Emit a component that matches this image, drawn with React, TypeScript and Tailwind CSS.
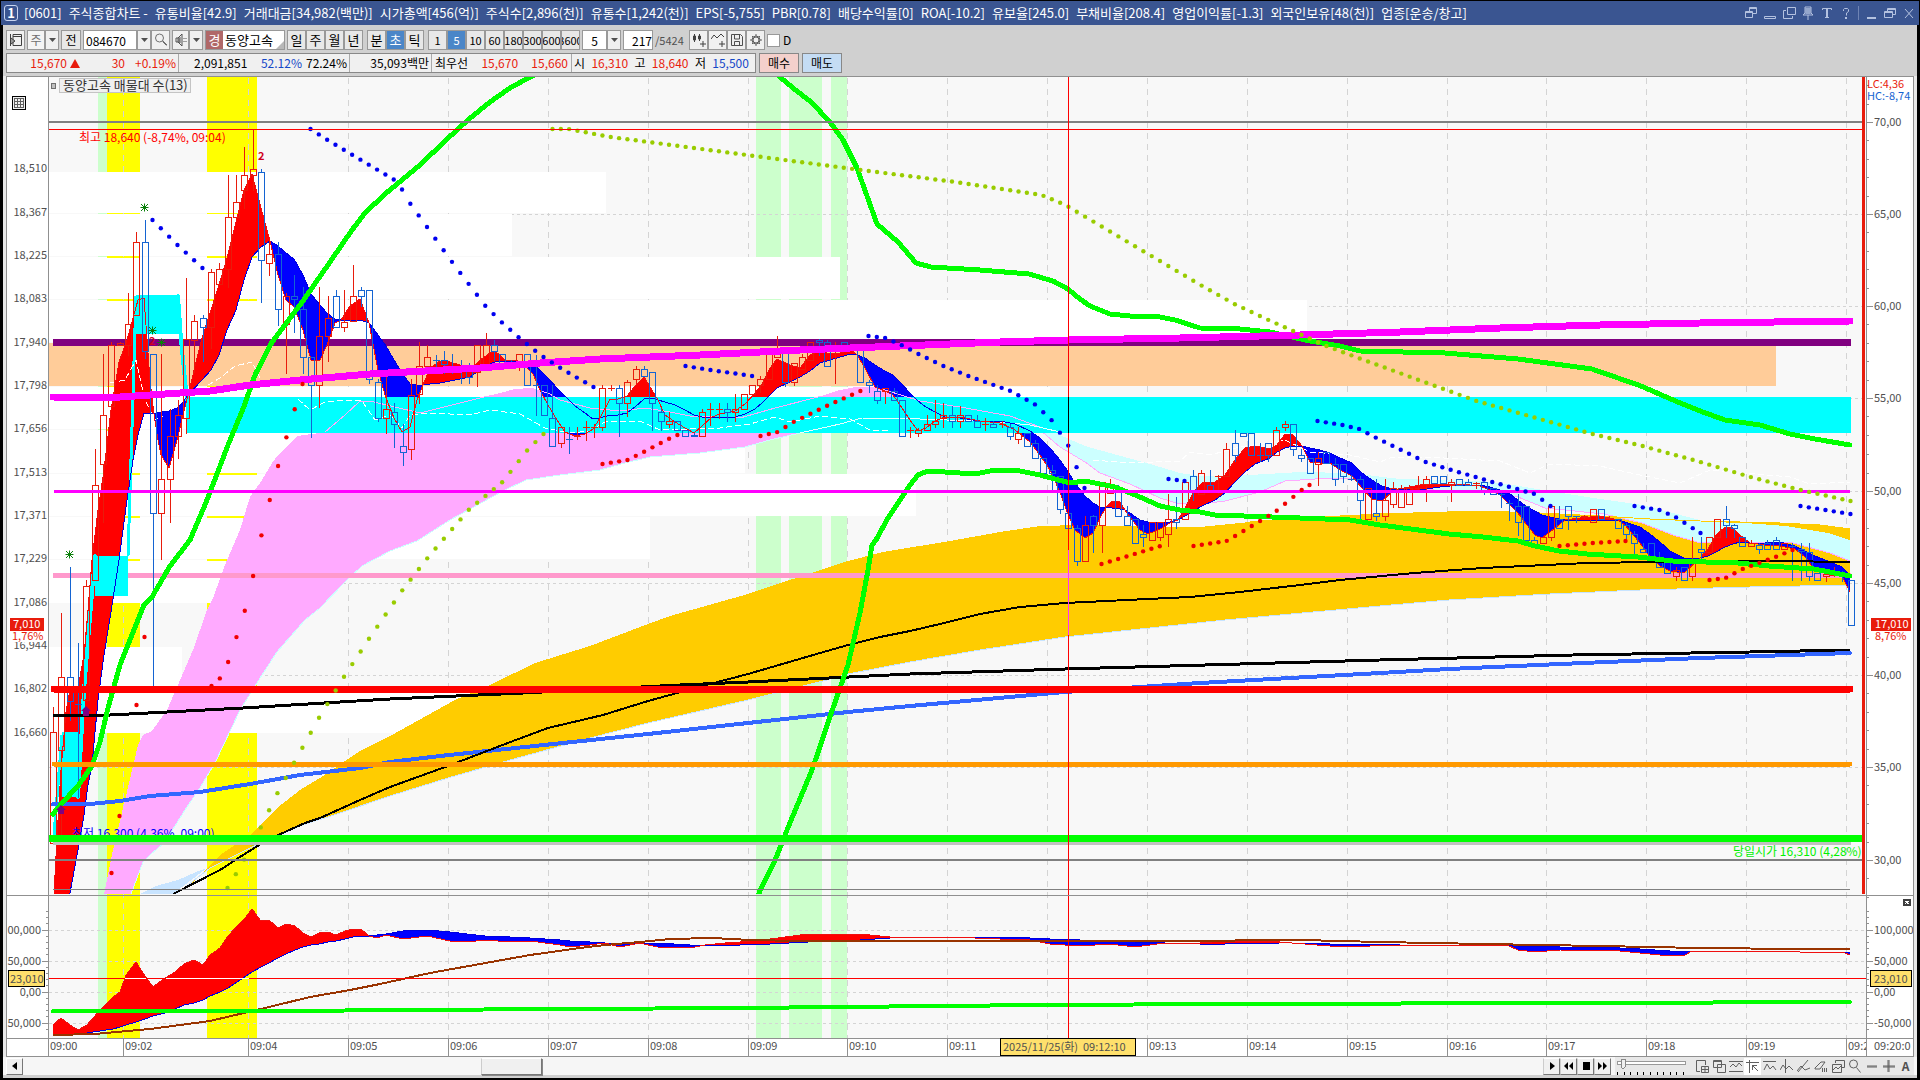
import { ReactNode } from "react";
import clsx from "clsx";

type Pt = [number, number];
type Band = [number, number, number];
type Candle = ["r" | "b", number, number, number, number];

const RED = "#e81c0c";
const BLUE = "#1464d2";
const X0 = 53;
const STEP = 8.322;

const minuteMarks: [number, string][] = [
    [48, "09:00"], [123, "09:02"], [248, "09:04"], [348, "09:05"], [448, "09:06"], [548, "09:07"],
    [648, "09:08"], [748, "09:09"], [847, "09:10"], [947, "09:11"], [1047, ""], [1147, "09:13"],
    [1247, "09:14"], [1347, "09:15"], [1447, "09:16"], [1546, "09:17"], [1646, "09:18"], [1746, "09:19"], [1846, "09:2"],
];

const priceLabels: [number, string][] = [
    [168, "18,510"], [212, "18,367"], [255, "18,225"], [298, "18,083"], [342, "17,940"], [385, "17,798"], [428, "17,656"],
    [472, "17,513"], [515, "17,371"], [558, "17,229"], [602, "17,086"], [645, "16,944"], [688, "16,802"], [732, "16,660"],
];

const rightLabels: [number, string][] = [
    [122, "70,00"], [214, "65,00"], [306, "60,00"], [398, "55,00"], [491, "50,00"], [583, "45,00"], [675, "40,00"], [767, "35,00"], [860, "30,00"],
];

const volumeRows: [number, number, number][] = [
    [172, 214, 606], [214, 257, 512], [257, 300, 840], [300, 343, 1307], [343, 387, 1776], [387, 430, 1050], [430, 474, 745],
    [474, 517, 916], [517, 560, 650], [560, 604, 250], [647, 690, 182], [690, 734, 690],
];

// high, body top, body bottom, low
const candles: Candle[] = [
    ["r", 707, 732, 843, 843], ["r", 613, 677, 750, 840], ["b", 567, 677, 701, 720], ["b", 643, 704, 704, 797], ["r", 580, 586, 700, 700],
    ["r", 449, 485, 580, 580], ["r", 354, 415, 464, 522], ["r", 342, 345, 406, 406], ["r", 342, 343, 345, 345], ["r", 293, 324, 345, 355],
    ["r", 232, 242, 315, 315], ["b", 220, 242, 351, 358], ["b", 354, 354, 513, 687], ["r", 354, 479, 513, 559], ["r", 409, 436, 479, 522],
    ["r", 400, 415, 436, 458], ["r", 278, 339, 418, 433], ["r", 315, 321, 340, 372], ["b", 315, 318, 327, 361], ["r", 269, 272, 327, 348],
    ["r", 263, 269, 284, 284], ["r", 175, 217, 269, 287], ["r", 175, 202, 217, 217], ["r", 147, 175, 190, 208], ["r", 129, 169, 175, 190],
    ["b", 169, 172, 260, 302], ["r", 240, 254, 263, 275], ["b", 242, 254, 309, 325], ["r", 293, 296, 324, 373], ["b", 275, 296, 299, 332],
    ["b", 287, 309, 357, 373], ["b", 357, 357, 385, 437], ["r", 287, 336, 385, 407], ["r", 296, 318, 336, 361], ["b", 290, 296, 327, 327],
    ["r", 290, 322, 327, 331], ["r", 265, 296, 321, 321], ["b", 287, 290, 296, 306], ["b", 290, 290, 379, 383], ["b", 379, 382, 418, 421],
    ["r", 372, 409, 418, 433], ["b", 403, 412, 424, 447], ["b", 424, 446, 452, 465], ["r", 379, 395, 449, 459], ["r", 342, 366, 394, 403],
    ["r", 345, 357, 366, 366], ["b", 355, 360, 360, 373], ["b", 351, 360, 364, 373], ["b", 354, 366, 366, 373], ["b", 360, 367, 367, 383],
    ["b", 363, 366, 377, 383], ["r", 345, 345, 372, 386], ["r", 333, 345, 368, 368], ["b", 340, 345, 351, 360], ["b", 354, 354, 366, 366],
    ["b", 360, 363, 366, 366], ["r", 354, 354, 363, 370], ["b", 354, 354, 385, 385], ["b", 355, 385, 385, 415], ["b", 385, 385, 415, 415],
    ["b", 385, 418, 446, 446], ["r", 427, 427, 443, 447], ["b", 427, 439, 439, 453], ["r", 427, 436, 436, 439], ["r", 421, 427, 427, 440],
    ["r", 424, 427, 427, 437], ["r", 385, 388, 427, 430], ["r", 385, 388, 388, 390], ["b", 385, 388, 403, 436], ["r", 380, 382, 403, 416],
    ["r", 366, 369, 379, 383], ["b", 366, 369, 376, 376], ["b", 372, 372, 403, 430], ["b", 409, 412, 421, 430], ["r", 412, 421, 424, 427],
    ["b", 421, 421, 430, 430], ["b", 430, 430, 436, 436], ["b", 433, 435, 436, 436], ["r", 409, 412, 436, 436], ["r", 403, 409, 409, 425],
    ["r", 403, 409, 409, 418], ["b", 403, 409, 412, 421], ["r", 394, 409, 412, 421], ["r", 394, 394, 409, 409], ["r", 385, 385, 394, 396],
    ["r", 376, 379, 385, 392], ["r", 354, 354, 379, 379], ["r", 336, 348, 357, 357], ["b", 348, 351, 382, 386], ["r", 363, 363, 382, 385],
    ["r", 354, 357, 369, 369], ["r", 342, 342, 360, 360], ["b", 339, 340, 342, 355], ["b", 340, 342, 366, 366], ["r", 342, 345, 348, 383],
    ["b", 342, 342, 345, 349], ["b", 345, 345, 348, 348], ["b", 345, 348, 382, 382], ["b", 380, 382, 385, 392], ["b", 385, 391, 400, 403],
    ["r", 388, 388, 391, 403], ["b", 388, 391, 400, 400], ["b", 400, 400, 436, 436], ["r", 427, 430, 430, 437], ["r", 428, 430, 433, 436],
    ["r", 415, 424, 430, 430], ["r", 400, 421, 424, 427], ["r", 403, 415, 418, 427], ["b", 406, 415, 421, 427], ["r", 406, 415, 421, 427],
    ["b", 415, 415, 421, 421], ["b", 415, 421, 427, 427], ["r", 418, 424, 424, 430], ["b", 421, 424, 427, 427], ["r", 421, 424, 424, 427],
    ["b", 424, 427, 436, 439], ["r", 427, 433, 439, 443], ["b", 433, 433, 446, 446], ["b", 440, 443, 458, 458], ["b", 458, 458, 473, 477],
    ["b", 465, 470, 473, 491], ["b", 476, 476, 509, 513], ["b", 513, 513, 528, 528], ["b", 525, 528, 561, 565], ["r", 516, 525, 561, 561],
    ["b", 515, 516, 525, 552], ["r", 482, 482, 525, 552], ["r", 479, 485, 493, 493], ["b", 485, 488, 516, 516], ["b", 506, 516, 525, 525],
    ["b", 519, 519, 543, 543], ["b", 525, 534, 537, 546], ["r", 522, 522, 540, 540], ["r", 522, 522, 537, 540], ["r", 494, 519, 534, 546],
    ["b", 497, 519, 522, 528], ["r", 482, 482, 519, 519], ["b", 470, 476, 491, 500], ["r", 470, 473, 494, 494], ["b", 470, 485, 491, 491],
    ["r", 475, 476, 476, 493], ["r", 443, 449, 476, 476], ["b", 430, 443, 455, 461], ["b", 433, 433, 436, 436], ["b", 433, 433, 455, 455],
    ["b", 443, 455, 455, 461], ["b", 443, 443, 455, 461], ["r", 427, 430, 455, 455], ["r", 421, 424, 427, 430], ["b", 424, 424, 449, 455],
    ["b", 449, 455, 458, 461], ["b", 458, 458, 473, 473], ["r", 452, 458, 464, 485], ["b", 452, 452, 463, 463], ["b", 458, 464, 479, 485],
    ["b", 464, 464, 476, 482], ["b", 475, 479, 479, 480], ["b", 476, 479, 500, 520], ["r", 488, 488, 519, 519], ["b", 479, 513, 516, 520],
    ["r", 479, 500, 516, 520], ["r", 482, 488, 504, 507], ["r", 485, 488, 507, 507], ["r", 485, 488, 504, 504], ["r", 476, 488, 488, 490],
    ["r", 476, 479, 484, 501], ["b", 476, 476, 483, 483], ["b", 476, 476, 483, 483], ["r", 479, 482, 485, 501], ["b", 479, 479, 485, 485],
    ["b", 479, 482, 485, 485], ["r", 482, 483, 483, 488], ["b", 482, 482, 491, 494], ["b", 488, 488, 494, 494], ["b", 493, 494, 494, 507],
    ["b", 500, 503, 503, 520], ["b", 494, 506, 522, 535], ["b", 506, 506, 540, 540], ["b", 537, 540, 546, 546], ["r", 537, 537, 543, 543],
    ["r", 506, 506, 537, 540], ["b", 506, 519, 528, 528], ["b", 506, 506, 516, 529], ["b", 516, 516, 516, 522], ["r", 515, 516, 516, 518],
    ["r", 509, 509, 522, 522], ["b", 509, 509, 519, 519], ["r", 516, 518, 518, 519], ["b", 519, 519, 528, 528], ["b", 523, 525, 534, 538],
    ["b", 531, 534, 543, 553], ["b", 543, 549, 552, 552], ["b", 543, 543, 562, 562], ["b", 552, 558, 567, 567], ["b", 562, 562, 573, 573],
    ["r", 567, 570, 576, 580], ["b", 567, 567, 580, 580], ["r", 537, 561, 576, 580], ["b", 537, 549, 552, 561], ["r", 537, 537, 552, 552],
    ["r", 519, 519, 537, 537], ["b", 506, 519, 525, 537], ["b", 524, 525, 528, 537], ["b", 537, 537, 546, 546], ["r", 540, 543, 546, 546],
    ["b", 543, 545, 549, 553], ["b", 540, 543, 549, 549], ["b", 537, 540, 549, 549], ["r", 543, 543, 549, 549], ["b", 543, 546, 546, 580],
    ["b", 543, 549, 551, 580], ["b", 543, 552, 576, 580], ["b", 573, 573, 580, 580], ["r", 570, 574, 576, 581], ["r", 567, 574, 574, 576],
    ["b", 571, 574, 576, 581], ["b", 580, 580, 625, 625],
];

// x, fast average, slow average
const ribbon: Band[] = [
    [54, 893, 990], [58, 820, 980], [61, 770, 950], [66, 712, 915], [70, 690, 893], [78, 688, 850], [84, 655, 815], [88, 610, 785],
    [92, 560, 765], [98, 510, 700], [104, 470, 655], [111, 410, 612], [119, 362, 560], [127, 340, 500], [133, 318, 460], [138, 300, 435],
    [144, 298, 413], [150, 380, 413], [154, 414, 414], [158, 440, 412], [161, 455, 412], [169, 468, 411], [177, 440, 408], [183, 415, 402],
    [188, 395, 395], [202, 338, 380], [211, 310, 370], [219, 285, 355], [227, 258, 330], [236, 222, 310], [244, 190, 280], [252, 174, 257],
    [261, 208, 247], [270, 241, 241], [278, 275, 246], [286, 300, 253], [294, 307, 259], [303, 330, 275], [311, 360, 294], [320, 360, 305],
    [327, 345, 313], [335, 323, 319], [341, 320, 320], [350, 306, 321], [360, 299, 320], [369, 323, 323], [378, 370, 335], [386, 398, 346],
    [394, 418, 360], [402, 432, 373], [410, 427, 384], [417, 400, 385], [423, 385, 385], [430, 368, 384], [440, 361, 383], [450, 362, 381],
    [460, 365, 379], [470, 370, 377], [480, 360, 370], [490, 353, 364], [495, 351, 362], [505, 360, 361], [518, 361, 361], [525, 366, 361],
    [533, 374, 364], [540, 390, 370], [548, 405, 378], [557, 420, 388], [565, 432, 396], [575, 436, 406], [585, 434, 413], [593, 429, 419],
    [600, 418, 418], [610, 399, 415], [618, 399, 415], [627, 396, 413], [635, 386, 407], [644, 377, 399], [652, 390, 398], [658, 400, 400],
    [665, 415, 402], [675, 422, 405], [685, 428, 410], [694, 433, 415], [702, 426, 417], [712, 417, 417], [720, 414, 417], [735, 411, 417],
    [745, 404, 414], [755, 393, 409], [762, 384, 403], [770, 368, 395], [777, 359, 388], [790, 365, 382], [800, 368, 377], [810, 355, 371],
    [820, 351, 363], [830, 354, 360], [840, 353, 357], [851, 350, 354], [857, 355, 355], [865, 368, 358], [875, 387, 365], [885, 391, 371],
    [893, 395, 375], [900, 405, 382], [910, 420, 393], [918, 431, 401], [926, 428, 407], [935, 421, 412], [945, 417, 417], [960, 417, 418],
    [980, 421, 421], [1000, 423, 421], [1015, 430, 424], [1030, 442, 431], [1040, 455, 438], [1050, 470, 448], [1060, 492, 460],
    [1067, 512, 470], [1075, 530, 483], [1085, 538, 496], [1093, 533, 503], [1100, 518, 507], [1106, 507, 507], [1112, 501, 508],
    [1120, 502, 509], [1125, 510, 510], [1130, 517, 513], [1140, 530, 520], [1148, 534, 522], [1160, 529, 523], [1170, 523, 522],
    [1178, 520, 520], [1185, 508, 516], [1195, 490, 510], [1202, 483, 506], [1215, 482, 500], [1225, 475, 493], [1235, 460, 482],
    [1245, 448, 472], [1255, 446, 464], [1270, 449, 458], [1277, 445, 452], [1285, 434, 448], [1293, 435, 446], [1302, 446, 446],
    [1310, 462, 448], [1320, 463, 450], [1330, 463, 453], [1340, 470, 458], [1352, 476, 463], [1362, 488, 473], [1372, 499, 480],
    [1382, 501, 486], [1392, 492, 489], [1398, 489, 489], [1410, 487, 490], [1420, 485, 490], [1440, 484, 487], [1460, 484, 485],
    [1480, 486, 485], [1490, 490, 487], [1500, 495, 490], [1510, 505, 494], [1518, 513, 500], [1527, 525, 507], [1535, 535, 511],
    [1542, 538, 515], [1550, 532, 517], [1565, 520, 520], [1580, 518, 520], [1600, 516, 520], [1618, 520, 520], [1625, 525, 522],
    [1640, 543, 527], [1650, 557, 534], [1660, 566, 542], [1670, 571, 551], [1684, 573, 558], [1700, 558, 558], [1708, 549, 556],
    [1716, 535, 552], [1725, 527, 547], [1733, 528, 544], [1740, 535, 542], [1750, 543, 543], [1765, 545, 543], [1780, 546, 542],
    [1795, 549, 546], [1805, 557, 551], [1815, 570, 556], [1830, 575, 562], [1842, 576, 567], [1850, 592, 575],
];

const indicator: Band[] = [
    [53, 1025, 1035], [61, 1018, 1035], [70, 1025, 1034], [78, 1030, 1034], [87, 1025, 1033], [100, 1010, 1031], [113, 997, 1029],
    [120, 992, 1027], [126, 975, 1025], [136, 962, 1022], [145, 976, 1019], [153, 987, 1016], [165, 978, 1013], [175, 972, 1009],
    [184, 964, 1005], [194, 960, 1003], [203, 965, 1000], [210, 955, 996], [220, 948, 992], [228, 936, 988], [240, 923, 980],
    [246, 917, 976], [252, 909, 972], [261, 921, 967], [269, 920, 963], [278, 928, 958], [286, 924, 954], [295, 926, 950],
    [303, 933, 947], [311, 937, 945], [319, 933, 944], [328, 932, 942], [336, 935, 941], [345, 931, 939], [353, 929, 937],
    [361, 929, 936], [369, 936, 936], [377, 938, 935], [386, 935, 934], [403, 939, 931], [427, 936, 930], [450, 941, 932],
    [467, 942, 934], [485, 940, 936], [510, 942, 937], [530, 941, 938], [560, 945, 940], [570, 947, 941], [590, 945, 942],
    [605, 943, 943], [620, 947, 943], [640, 943, 943], [657, 947, 943], [690, 948, 945], [705, 945, 945], [725, 943, 945],
    [740, 942, 945], [770, 939, 944], [808, 934, 942], [860, 934, 940], [890, 937, 938], [900, 937, 937], [950, 937, 937],
    [1000, 939, 937], [1030, 940, 938], [1050, 944, 939], [1080, 946, 940], [1110, 944, 941], [1135, 947, 942], [1165, 943, 943],
    [1200, 943, 944], [1225, 941, 944], [1280, 942, 943], [1292, 943, 943], [1330, 946, 944], [1370, 946, 944], [1400, 945, 945],
    [1507, 945, 945], [1518, 950, 946], [1535, 952, 946], [1560, 950, 947], [1620, 951, 948], [1640, 953, 949], [1670, 956, 951],
    [1685, 955, 952], [1692, 951, 951], [1800, 952, 952], [1845, 953, 952], [1850, 955, 953],
];

const magentaLine: Pt[] = [[53, 397], [105, 398], [150, 395], [210, 391], [250, 385], [300, 380], [370, 374], [480, 368], [540, 363], [600, 359], [700, 355], [800, 350], [900, 346], [1000, 342], [1068, 340], [1180, 338], [1300, 335], [1400, 332], [1500, 328], [1600, 325], [1700, 323], [1850, 321]];

const upperBand: Pt[] = [[53, 814], [62, 803], [78, 786], [92, 766], [100, 742], [108, 708], [120, 665], [132, 635], [144, 605], [152, 597], [170, 566], [190, 540], [205, 505], [217, 474], [228, 445], [243, 409], [255, 375], [272, 342], [290, 318], [305, 298], [330, 262], [352, 230], [365, 213], [385, 194], [420, 165], [445, 141], [469, 119], [490, 102], [510, 88], [530, 77], [550, 68], [770, 68], [780, 77], [793, 88], [811, 102], [830, 122], [843, 140], [857, 168], [867, 196], [877, 224], [898, 242], [916, 263], [931, 267], [980, 270], [1029, 274], [1053, 281], [1068, 289], [1080, 299], [1090, 306], [1110, 314], [1130, 316], [1155, 316], [1175, 320], [1200, 328], [1240, 329], [1270, 332], [1310, 341], [1340, 346], [1360, 351], [1445, 353], [1518, 359], [1592, 369], [1641, 386], [1673, 400], [1700, 411], [1725, 420], [1760, 425], [1790, 434], [1815, 439], [1850, 445]];

const lowerBand: Pt[] = [[759, 893], [776, 858], [787, 830], [812, 770], [833, 708], [848, 665], [860, 613], [868, 570], [872, 545], [876, 540], [888, 518], [900, 500], [910, 485], [918, 475], [928, 471], [945, 472], [975, 474], [995, 470], [1015, 470], [1040, 475], [1070, 483], [1085, 481], [1100, 484], [1115, 487], [1140, 497], [1160, 506], [1180, 510], [1200, 512], [1215, 515], [1300, 518], [1350, 520], [1380, 525], [1449, 534], [1483, 537], [1518, 541], [1535, 546], [1559, 551], [1587, 554], [1638, 557], [1673, 561], [1738, 563], [1769, 566], [1814, 569], [1850, 576]];

const blackFast: Pt[] = [[173, 894], [220, 870], [240, 857], [267, 840], [305, 823], [320, 818], [360, 800], [390, 787], [448, 766], [513, 741], [548, 728], [603, 715], [648, 701], [710, 684], [748, 674], [820, 653], [848, 645], [880, 637], [910, 631], [940, 624], [980, 614], [1020, 607], [1065, 603], [1127, 600], [1190, 597], [1240, 592], [1300, 585], [1340, 580], [1414, 573], [1483, 568], [1587, 563], [1655, 562], [1776, 561], [1850, 562]];
const blackSlow: Pt[] = [[53, 715], [110, 715], [167, 712], [243, 708], [340, 702], [390, 699], [523, 693], [680, 685], [748, 682], [910, 674], [1065, 669], [1380, 660], [1573, 655], [1750, 652], [1850, 650]];
const blueSlow: Pt[] = [[53, 804], [90, 804], [120, 801], [150, 796], [200, 792], [250, 784], [300, 775], [360, 768], [390, 762], [440, 756], [648, 734], [748, 723], [848, 712], [910, 706], [1065, 692], [1200, 683], [1380, 673], [1449, 669], [1583, 663], [1700, 658], [1850, 653]];

const goldUpper: Pt[] = [[192, 884], [220, 855], [250, 835], [277, 808], [300, 790], [320, 778], [360, 751], [390, 736], [455, 700], [490, 685], [535, 663], [590, 646], [648, 624], [670, 616], [748, 594], [793, 579], [848, 561], [883, 552], [950, 541], [1000, 532], [1040, 526], [1080, 525], [1130, 526], [1200, 527], [1250, 522], [1300, 518], [1380, 514], [1480, 511], [1540, 513], [1600, 516], [1650, 519], [1700, 521], [1780, 523], [1820, 525], [1850, 529]];
const goldLower: Pt[] = [[176, 894], [210, 868], [250, 848], [275, 837], [300, 826], [340, 813], [390, 796], [448, 778], [503, 762], [590, 738], [648, 723], [748, 700], [823, 681], [848, 674], [910, 662], [980, 650], [1065, 637], [1225, 620], [1380, 606], [1449, 600], [1550, 594], [1640, 590], [1750, 587], [1850, 585]];
const pinkUpper: Pt[] = [[104, 894], [113, 850], [125, 800], [138, 745], [143, 735], [152, 731], [167, 710], [178, 685], [193, 650], [207, 610], [213, 598], [225, 565], [240, 530], [250, 497], [262, 480], [272, 463], [278, 455], [290, 444], [297, 436], [320, 433], [480, 433], [484, 397], [500, 393], [515, 389], [530, 388], [540, 391], [550, 398], [552, 433], [816, 433], [818, 397], [840, 390], [855, 387], [870, 387], [885, 390], [905, 398]];
const pinkLower: Pt[] = [[131, 894], [143, 862], [150, 855], [165, 842], [185, 810], [200, 788], [215, 763], [240, 710], [262, 675], [277, 652], [305, 620], [320, 608], [345, 582], [362, 566], [390, 551], [417, 541], [450, 520], [503, 491], [526, 480], [560, 475], [600, 470], [625, 463], [650, 457], [700, 453], [745, 447], [770, 440], [800, 433], [905, 420]];
const paleUpper: Pt[] = [[1040, 425], [1060, 435], [1085, 446], [1110, 453], [1150, 464], [1180, 473], [1200, 476], [1250, 475], [1300, 472], [1350, 473], [1400, 479], [1480, 481], [1500, 483], [1587, 497], [1642, 505], [1673, 513], [1707, 522], [1745, 523], [1786, 526], [1828, 533], [1850, 540]];
const paleLower: Pt[] = [[1040, 430], [1060, 447], [1085, 462], [1100, 473], [1130, 484], [1160, 498], [1180, 504], [1210, 503], [1225, 501], [1260, 492], [1285, 481], [1330, 478], [1360, 479], [1385, 489], [1483, 491], [1518, 497], [1545, 508], [1604, 514], [1642, 523], [1673, 535], [1697, 542], [1793, 543], [1830, 553], [1850, 561]];
const pinkThin: Pt[] = [[325, 432], [345, 415], [360, 401], [370, 401], [395, 407], [420, 413], [440, 408], [484, 397], [530, 388], [548, 393], [560, 400], [590, 408], [620, 411], [645, 408], [670, 412], [690, 416], [740, 418], [775, 408], [818, 397], [870, 387], [885, 390], [920, 401], [960, 407], [1010, 416], [1040, 427]];
const whiteDash: Pt[][] = [
    [[110, 383], [125, 380], [136, 360], [145, 400], [155, 420], [163, 416]],
    [[208, 385], [220, 378], [235, 366], [252, 362], [262, 382]],
    [[298, 399], [310, 410], [325, 402], [345, 400], [362, 401], [375, 420], [390, 415], [402, 428], [410, 415], [430, 413], [470, 415], [490, 410], [520, 414], [545, 428], [570, 433], [590, 431], [605, 422], [640, 421], [660, 430], [720, 428], [750, 424], [775, 417], [790, 422], [820, 416], [850, 419], [870, 430], [890, 430]],
    [[1093, 460], [1130, 463], [1180, 461], [1190, 452], [1210, 455], [1240, 447], [1285, 440], [1310, 452], [1350, 455], [1380, 462], [1390, 458], [1425, 457], [1500, 461], [1530, 473], [1550, 464], [1600, 466], [1640, 475], [1680, 483], [1710, 470], [1790, 477], [1810, 484], [1850, 482]],
];
const brownLine: Pt[] = [[53, 1035], [95, 1034], [150, 1029], [210, 1021], [265, 1008], [310, 997], [350, 990], [380, 984], [430, 973], [480, 964], [530, 955], [580, 948], [605, 945], [640, 942], [670, 939], [712, 938], [750, 940], [800, 941], [1170, 941], [1301, 940], [1380, 942], [1484, 944], [1600, 946], [1700, 948], [1800, 949], [1850, 949]];

const blueDots: Pt[][] = [
    [[152, 220], [161, 229], [177, 245], [202, 268]],
    [[310, 129], [327, 140], [394, 180], [402, 190], [410, 204], [453, 264], [485, 306], [502, 323], [519, 338], [535, 351], [543, 357], [560, 368], [577, 378], [593, 387]],
    [[685, 366], [710, 370], [752, 376]],
    [[868, 336], [885, 338], [901, 345], [918, 354], [943, 366], [968, 376], [1010, 391], [1034, 404], [1051, 420], [1059, 432], [1068, 446], [1076, 467], [1084, 488]],
    [[1168, 479], [1184, 481]],
    [[1317, 421], [1342, 425], [1359, 429], [1376, 438], [1409, 454], [1425, 462], [1451, 470], [1492, 482], [1534, 494], [1550, 506]],
    [[1634, 506], [1659, 510], [1675, 517], [1692, 528], [1700, 533]],
    [[1800, 506], [1825, 510], [1850, 514]],
];
const redDots: Pt[][] = [
    [[111, 873], [119, 816]], [[136, 705], [144, 637]],
    [[211, 686], [219, 679], [227, 664], [236, 637], [244, 612], [252, 579], [261, 535], [269, 501], [277, 468], [286, 437], [294, 410], [302, 384]],
    [[602, 464], [627, 460], [643, 452], [668, 439], [677, 435]],
    [[760, 436], [777, 432], [793, 422], [826, 406], [860, 391]],
    [[1101, 564], [1134, 554], [1160, 546]],
    [[1193, 546], [1226, 541], [1243, 531], [1276, 511], [1301, 490], [1309, 485]],
    [[1559, 546], [1592, 543], [1625, 541]],
    [[1709, 580], [1725, 578], [1742, 569], [1775, 557], [1792, 550]],
];
const oliveDots: Pt[][] = [
    [[227, 888], [236, 873], [244, 859], [261, 826], [277, 793], [294, 762], [319, 717], [344, 676], [369, 638], [402, 590], [427, 558], [444, 538], [469, 509], [502, 482], [527, 450], [543, 434]],
    [[552, 129], [568, 129], [610, 137], [686, 147], [845, 168], [955, 182], [1041, 195], [1065, 205], [1102, 227], [1200, 285], [1234, 304], [1268, 320], [1326, 346], [1358, 358], [1476, 401], [1592, 434], [1642, 446], [1700, 462], [1750, 477], [1800, 490], [1850, 501]],
];

const join = (pts: Pt[]) => pts.map((p) => p.join(",")).join(" ");
const area = (top: Pt[], bottom: Pt[]) => join([...top, ...[...bottom].reverse()]);
const candleX = (i: number) => Math.round(X0 + i * STEP);

const yAt = (pts: Pt[], x: number) => {
    const i = Math.max(1, pts.findIndex((p) => p[0] >= x));
    const [x1, y1] = pts[i - 1];
    const [x2, y2] = pts[i];
    return y1 + ((y2 - y1) * (x - x1)) / (x2 - x1);
};

const Dots = ({ runs, color }: { runs: Pt[][]; color: string }) => (
    <g fill={color}>
        {runs.map((pts) => {
            const start = pts[0][0];
            const count = Math.round((pts[pts.length - 1][0] - start) / STEP) + 1;
            return Array.from({ length: count }, (_, i) => {
                const x = Math.min(start + i * STEP, pts[pts.length - 1][0]);
                return <circle key={`${start}-${i}`} cx={x + 0.5} cy={yAt(pts, x)} r={2.2} />;
            });
        })}
    </g>
);

const Line = ({ pts, color, width = 1, dash }: { pts: Pt[]; color: string; width?: number; dash?: string }) => (
    <polyline points={join(pts)} fill="none" stroke={color} strokeWidth={width} strokeDasharray={dash} strokeLinejoin="round" strokeLinecap={width > 3 ? "round" : "butt"} />
);

const RibbonFill = ({ data }: { data: Band[] }) => (
    <>
        {data.slice(1).map(([x, fast, slow], i) => {
            const [px, pf, ps] = data[i];
            return <polygon key={x} points={`${px},${pf} ${x},${fast} ${x},${slow} ${px},${ps}`} fill={fast + pf < slow + ps ? "#ff0000" : "#0000ff"} />;
        })}
    </>
);

const RibbonLines = ({ data }: { data: Band[] }) => (
    <>
        <Line pts={data.map(([x, , s]) => [x, s])} color="#0000e0" />
        <Line pts={data.map(([x, f]) => [x, f])} color="#f01010" />
    </>
);

const Label = ({ x, y, fill = "#505050", anchor, className, children }: { x: number; y: number; fill?: string; anchor?: "end"; className?: string; children: ReactNode }) => (
    <text x={x} y={y} fill={fill} textAnchor={anchor} className={className}>{children}</text>
);

const Chart = () => (
    <svg viewBox="6 76 1908 981" className="block h-auto w-full bg-white text-[11px]" role="img" aria-label="동양고속">
        <defs>
            <clipPath id="main"><rect x="49" y="77" width="1817" height="817" /></clipPath>
            <clipPath id="frame"><rect x="6" y="76" width="1907" height="981" /></clipPath>
            <clipPath id="axis"><rect x="49" y="1039" width="1817" height="18" /></clipPath>
        </defs>
        <g shapeRendering="crispEdges">
            <rect x="49" y="77" width="1817" height="961" fill="#f8f8f8" />
            <g fill="#ccffcc">
                <rect x="98" y="77" width="9" height="961" />
                <rect x="756" y="77" width="25" height="961" />
                <rect x="789" y="77" width="33" height="961" />
                <rect x="831" y="77" width="16" height="961" />
            </g>
            <g fill="#ffff00">
                <rect x="107" y="77" width="33" height="961" />
                <rect x="207" y="77" width="50" height="961" />
            </g>
            <g stroke="#d4d4d4" strokeDasharray="6 5">
                {minuteMarks.slice(1).map(([x]) => <line key={x} x1={x + 0.5} x2={x + 0.5} y1="78" y2="1038" />)}
                {rightLabels.map(([y]) => <line key={y} x1="49" x2="1864" y1={y + 0.5} y2={y + 0.5} strokeDasharray="3 3" />)}
                {[930, 961, 992, 1023].map((y) => <line key={y} x1="49" x2="1866" y1={y + 0.5} y2={y + 0.5} strokeDasharray="3 3" />)}
            </g>
            {volumeRows.map(([top, bottom, right]) => (
                <rect key={top} x="49" y={top} width={right - 49} height={bottom - top - 1} fill={top === 343 ? "#ffcc99" : "#ffffff"} />
            ))}
            {[257, 300, 430, 474, 517, 560].map((y) => (
                <g key={y} fill="#ffff00">
                    <rect x="107" y={y} width="33" height="1" />
                    <rect x="207" y={y} width="50" height="1" />
                </g>
            ))}
            <g clipPath="url(#main)">
                <polygon points="140,894 156,886 178,880 196,872 207,868 173,894" fill="#c8e4ff" />
                <polygon points={area(goldUpper, goldLower)} fill="#ffcc00" />
                <Line pts={goldLower} color="#c8e4ff" />
                <polygon points={area(pinkUpper, pinkLower)} fill="#ffaaff" />
                <Line pts={pinkLower.slice(0, -1)} color="#ccffff" />
                <polygon points={area(paleUpper, paleLower)} fill="#ccffff" />
                <Line pts={paleLower} color="#ffaaff" />
                <Line pts={goldUpper.slice(24)} color="#ffcc00" />
                <rect x="53" y="573" width="1798" height="5" fill="#ff99cc" />
                <rect x="53" y="339" width="1798" height="7" fill="#800080" />
                <RibbonFill data={ribbon} />
                <rect x="186" y="397" width="1665" height="36" fill="#00ffff" />
                <g fill="#00ffff" stroke="#00ffff">
                    <rect x="62" y="732" width="16" height="64" />
                    <rect x="95" y="556" width="32" height="39" />
                    <polygon points="136,295 178,295 180,333 136,333" />
                    <Line pts={[[54, 835], [62, 735]]} color="#00ffff" width={3} />
                    <Line pts={[[78, 797], [84, 690], [95, 556]]} color="#00ffff" width={4} />
                    <Line pts={[[128, 556], [131, 460], [136, 296]]} color="#00ffff" width={3} />
                    <Line pts={[[178, 296], [181, 340], [187, 400]]} color="#00ffff" width={4} />
                </g>
                <Line pts={pinkThin} color="#ffaaff" />
                <Line pts={[[800, 433], [840, 424], [862, 418], [920, 419], [1000, 422], [1030, 425], [1060, 432]]} color="#e8ffff" />
                {whiteDash.map((pts) => <Line key={pts[0][0]} pts={pts} color="#ffffff" dash="6 3" />)}
                <RibbonLines data={ribbon} />
            </g>
            {candles.map(([kind, high, top, bottom, low], i) => {
                const x = candleX(i);
                const color = kind === "r" ? RED : BLUE;
                return (
                    <g key={i} stroke={color} fill="none">
                        <line x1={x + 0.5} x2={x + 0.5} y1={high} y2={top} />
                        <line x1={x + 0.5} x2={x + 0.5} y1={bottom} y2={low + 1} />
                        {top === bottom
                            ? <line x1={x - 3} x2={x + 4} y1={top + 0.5} y2={top + 0.5} />
                            : <rect x={x - 2.5} y={top + 0.5} width="6" height={bottom - top} />}
                    </g>
                );
            })}
            <g clipPath="url(#main)">
                <Line pts={blackSlow} color="#000000" width={3} />
                <Line pts={blueSlow} color="#3366ff" width={4} />
                <Line pts={blackFast} color="#000000" width={2} />
                <Line pts={upperBand} color="#00ff00" width={5} />
                <Line pts={lowerBand} color="#00ff00" width={5} />
                <Line pts={magentaLine} color="#ff00ff" width={7} />
                <Line pts={[[54, 491], [1850, 491]]} color="#ff00ff" width={3} />
                <Line pts={[[54, 689], [1850, 689]]} color="#ff0000" width={7} />
                <Line pts={[[54, 764], [1850, 764]]} color="#ff9900" width={5} />
            </g>
        </g>
        <Dots runs={redDots} color="#f00000" />
        <Dots runs={oliveDots} color="#99cc00" />
        <Dots runs={blueDots} color="#0000f0" />
        <g stroke="#0a800a">
            {[[144, 207], [69, 554], [152, 330], [161, 342]].map(([x, y]) => (
                <path key={y} d={`M${x - 3.5} ${y + 0.5}h8M${x + 0.5} ${y - 3.5}v8M${x - 3} ${y - 3}l7 7M${x + 4} ${y - 3}l-7 7`} />
            ))}
        </g>
        <g fill="#800080">
            <path d="M86 706l5 5h-2v5h-6v-5h-2z" />
            <path d="M61 805l5 5h-2v4h-6v-4h-2z" />
        </g>
        <g fill="#d00020" fontWeight="bold">
            <text x="258" y="160">2</text>
            <text x="149" y="345">2</text>
        </g>
        <Label x={79} y={142} fill="#ff0000" className="text-xs">최고 18,640 (-8,74%, 09:04)</Label>
        <Label x={72} y={838} fill="#0000ff" className="text-xs">최저 16,300 (4,36%, 09:00)</Label>
        <Label x={1733} y={856} fill="#00f000" className="text-xs">당일시가 16,310 (4,28%)</Label>
        <g shapeRendering="crispEdges">
            <rect x="49" y="121" width="1815" height="2" fill="#808080" />
            <rect x="49" y="129" width="1815" height="1" fill="#ff0000" />
            <rect x="53" y="842" width="1798" height="3" fill="#c0c0c0" />
            <rect x="49" y="835" width="1815" height="7" fill="#00ff00" />
            <rect x="49" y="859" width="1815" height="2" fill="#808080" />
            <rect x="53" y="889" width="1797" height="1" fill="#808080" />
            <RibbonFill data={indicator} />
            <RibbonLines data={indicator} />
            <Line pts={brownLine} color="#993300" width={2} />
            <Line pts={[[53, 1011], [290, 1011], [400, 1010], [740, 1008], [1040, 1005], [1228, 1004], [1580, 1003], [1850, 1002]]} color="#00ff00" width={4} />
            <rect x="49" y="978" width="1817" height="1" fill="#ff0000" />
            <path d="M125 978.5h21M166 978.5h83" stroke="#ffffff" />
            <rect x="1068" y="77" width="1" height="961" fill="#ff0000" />
            <rect x="1068" y="397" width="1" height="36" fill="#000000" />
            <rect x="1068" y="550" width="1" height="85" fill="#ff33ff" />
            <rect x="1862" y="77" width="3" height="817" fill={RED} />
            <g stroke="#909090">
                <path d="M6 76.5H1914M6.5 76V1057M1913.5 76V1057M48.5 76V1057M1866.5 76V1057M6 895.5H1914M6 1038.5H1914M6 1056.5H1914" />
                {minuteMarks.filter(([, t]) => t).map(([x]) => <line key={x} x1={x + 0.5} x2={x + 0.5} y1="1038" y2="1057" />)}
                {rightLabels.map(([y]) => <path key={y} d={`M1867 ${y + 0.5}h6M1867 ${y + 18.5}h2M1867 ${y + 37.5}h2M1867 ${y - 17.5}h2M1867 ${y - 36.5}h2`} />)}
                {[930, 961, 992, 1023].map((y) => <path key={y} d={`M1867 ${y + 0.5}h6M1867 ${y + 6.5}h2M1867 ${y - 6.5}h2M1867 ${y - 12.5}h2M1867 ${y - 18.5}h2M42 ${y + 0.5}h6M46 ${y - 6.5}h2M46 ${y - 12.5}h2M46 ${y - 18.5}h2M46 ${y + 6.5}h2`} />)}
            </g>
        </g>
        {priceLabels.map(([y, text]) => <Label key={y} x={47} y={y + 4} anchor="end">{text}</Label>)}
        <g clipPath="url(#frame)">
            {rightLabels.map(([y, text]) => <Label key={y} x={1874} y={y + 4}>{text}</Label>)}
            <Label x={1867} y={88} fill={RED}>LC:4,36</Label>
            <Label x={1867} y={100} fill={BLUE}>HC:-8,74</Label>
            {[[930, "100,000"], [961, "50,000"], [992, "0,00"], [1023, "-50,000"]].map(([y, text]) => <Label key={y} x={1874} y={Number(y) + 4}>{text}</Label>)}
            <Label x={1874} y={1050}>09:20:0</Label>
        </g>
        {[[930, "00,000"], [961, "50,000"], [992, "0,00"], [1023, "50,000"]].map(([y, text]) => <Label key={y} x={41} y={Number(y) + 4} anchor="end">{text}</Label>)}
        <g clipPath="url(#axis)">
            {minuteMarks.map(([x, text]) => <Label key={x} x={x + 2} y={1050}>{text}</Label>)}
        </g>
        <g shapeRendering="crispEdges">
            <rect x="10" y="618" width="34" height="13" fill={RED} />
            <rect x="10" y="631" width="34" height="11" fill="#ffffff" />
            <rect x="1871" y="618" width="40" height="13" fill={RED} />
            <rect x="8.5" y="970.5" width="36" height="16" fill="#ffe06c" stroke="#000000" />
            <rect x="1870.5" y="970.5" width="41" height="16" fill="#ffe06c" stroke="#000000" />
            <rect x="1000.5" y="1038.5" width="135" height="17" fill="#ffe06c" stroke="#000000" />
        </g>
        <Label x={13} y={628} fill="#ffffff">7,010</Label>
        <Label x={12} y={640} fill={RED}>1,76%</Label>
        <Label x={1875} y={628} fill="#ffffff">17,010</Label>
        <Label x={1875} y={640} fill={RED}>8,76%</Label>
        <Label x={10} y={983}>23,010</Label>
        <Label x={1874} y={983}>23,010</Label>
        <Label x={1003} y={1051} className="whitespace-pre">2025/11/25(화)  09:12:10</Label>
        <g shapeRendering="crispEdges">
            <rect x="51.5" y="83.5" width="4" height="5" fill="#c0c0c0" stroke="#707070" />
            <rect x="59.5" y="78.5" width="131" height="14" fill="#f0f0f0" stroke="#c4c4c4" />
            <rect x="12.5" y="96.5" width="13" height="13" fill="#f0f0f0" stroke="#000000" />
            <path d="M14.5 98.5h9v9h-9zM14.5 101.5h9M14.5 104.5h9M17.5 98v9M20.5 98v9" fill="none" stroke="#606060" />
            <rect x="1903" y="899" width="8" height="7" fill="#404040" />
            <path d="M1905 901l4 3m0-3l-4 3" stroke="#ffffff" />
        </g>
        <Label x={63} y={90} fill="#303030" className="text-[13px]">동양고속 매물대 수(13)</Label>
    </svg>
);

const titleItems = ["주식종합차트 -", "유통비율[42.9]", "거래대금[34,982(백만)]", "시가총액[456(억)]", "주식수[2,896(천)]", "유통수[1,242(천)]", "EPS[-5,755]", "PBR[0.78]", "배당수익률[0]", "ROA[-10.2]", "유보율[245.0]", "부채비율[208.4]", "영업이익률[-1.3]", "외국인보유[48(천)]", "업종[운송/창고]"];

const titleIcons: [string, string][] = [
    ["새 창", "M1.5 5.5h7v6h-7zM1 6.5h8M5.5 5V1.5h7v6H9M5 2.5h8"], ["내리기", "M1.5 10.5h11v2h-11z"], ["복사", "M5.5 1.5h8v7h-8zM4 4.5H1.5v8h9V10"],
    ["고정", "M4 1h6v6l2 2H2l2-2zM7 9v5M5 2v6M6 2v6M7 2v6M8 2v6M9 2v6"], ["글꼴", "M2.5 4V2.500h9V4M6.500 2v10M7.500 2v10M5 11.500h4"], ["도움말", "M4.500 5V3.500l1-1h3l1 1v2L7.500 7v2.500M7.500 11v2M6.500 11v2"],
];

const Square = ({ on, children }: { on?: boolean; children: ReactNode }) => (
    <button className={clsx("flex h-5 w-[19px] items-center justify-center overflow-hidden border border-[#999] whitespace-nowrap", on ? "bg-[#4a86c8] text-white" : "bg-[#e8e8e8]")}>
        {children}
    </button>
);

const Arrow = ({ label }: { label: string }) => (
    <button aria-label={label} className="flex h-5 w-[14px] items-center justify-center border border-[#999] bg-[#f0f0f0]">
        <svg width="7" height="4" viewBox="0 0 7 4"><path d="M0 0h7L3.5 4z" fill="#505050" /></svg>
    </button>
);

const Icon = ({ d, label, className }: { d: string; label: string; className?: string }) => (
    <button aria-label={label} className={clsx("flex items-center justify-center", className)}>
        <svg width="14" height="14" viewBox="0 0 14 14" fill="none" stroke="currentColor"><path d={d} /></svg>
    </button>
);

const TitleBar = () => (
    <header className="flex h-[24px] items-center bg-[#3a5591] px-[3px] text-[13px] text-white">
        <span className="mr-[6px] flex h-4 w-[14px] items-center justify-center rounded-[3px] border border-[#c8d4f0] font-bold">1</span>
        <h1 className="flex gap-[7px] whitespace-nowrap">
            <span>[0601]</span>
            {titleItems.map((item) => <span key={item}>{item}</span>)}
        </h1>
        <div className="ml-auto flex items-center gap-[5px] text-[#b4c2e0]">
            {titleIcons.map(([label, d]) => <Icon key={label} label={label} d={d} />)}
            <span className="h-[14px] w-px bg-[#6f84b4]" />
            <Icon label="최소화" d="M3 11.5h9M3 12.5h9" />
            <Icon label="복원" d="M1.5 5.5h8v6h-8zM1 6.5h8M4.5 5V2.5h8v6H10M4 3.5h8" />
            <Icon label="닫기" d="M3 3l8 9M11 3l-8 9" />
        </div>
    </header>
);

const Toolbar = () => (
    <div className="flex h-5 items-center px-[3px]">
        <Icon label="목록" d="M4 1.5h8.5v11H4zM4 3.5h9M1.500 1v12M2 5l4 3-4 3z" className="mr-[2px] h-5 w-[19px] border border-[#999] bg-[#f0f0f0] text-[#404040]" />
        <span className="flex h-5 w-[18px] items-center justify-center border border-[#999] bg-[#f4f4f4] text-[#707070]">주</span>
        <Arrow label="주기 선택" />
        <button className="mx-[2px] h-5 w-5 border border-[#999] bg-[#e8e8e8]">전</button>
        <input aria-label="종목코드" defaultValue="084670" className="h-5 w-[54px] border border-[#999] bg-white px-[2px] outline-none" />
        <Arrow label="종목 선택" />
        <Icon label="검색" d="M1.5 5a4 4 0 1 0 8 0a4 4 0 1 0-8 0M8.500 8.500l4 4M9 8l4 4" className="h-5 w-[19px] border border-[#999] bg-[#f0f0f0] text-[#707070]" />
        <Icon label="소리" d="M2 5v4h2l4 4V1L4 5zM4 5v4M5 5v5M6 4v6M10 5v1M10 8v1M12 5v1M12 8v1" className="ml-[2px] h-5 w-[17px] border border-[#999] bg-[#f0f0f0] text-[#505050]" />
        <Arrow label="소리 선택" />
        <div className="mx-[2px] flex h-5 w-[80px] items-center border border-[#999] bg-white text-[13px]">
            <span className="mr-[2px] flex h-[18px] w-[17px] items-center justify-center bg-[#b06868] text-white">경</span>
            동양고속
            <svg className="mt-auto ml-auto" width="8" height="8" viewBox="0 0 8 8"><path d="M8 0v8H0z" fill="#b8b8b8" /></svg>
        </div>
        <div className="flex text-[13px]">{["일", "주", "월", "년"].map((t) => <Square key={t}>{t}</Square>)}</div>
        <div className="mx-[4px] flex text-[13px]">{["분", "초", "틱"].map((t) => <Square key={t} on={t === "초"}>{t}</Square>)}</div>
        <div className="flex text-[11px]">{["1", "5", "10", "60", "180", "300", "600", "3600"].map((t) => <Square key={t} on={t === "5"}>{t}</Square>)}</div>
        <input aria-label="간격" defaultValue="5" className="ml-[2px] h-5 w-[25px] border border-[#999] bg-white text-center outline-none" />
        <Arrow label="간격 선택" />
        <input aria-label="봉 개수" defaultValue="217" className="mr-[2px] ml-[2px] h-5 w-[30px] border border-[#999] bg-white text-right outline-none" />
        <span className="w-[34px] text-[11px] text-[#505050]">/5424</span>
        <Icon label="봉 추가" d="M2.500 1v8M1.500 3h2v4h-2zM7.500 1v7M6.500 3h2v3h-2zM11 8v6M8 11h6" className="h-5 w-[19px] border border-[#999] bg-[#f0f0f0] text-[#404040]" />
        <Icon label="지표 추가" d="M0 6l3-4 3 3 4-4 3 3M11 8v6M8 11h6" className="h-5 w-[19px] border border-[#999] bg-[#f0f0f0] text-[#404040]" />
        <Icon label="저장" d="M1.500 1.500h9l2 2v9h-11zM4.500 2v4h5V2M4.500 12V8.500h5V12" className="h-5 w-[19px] border border-[#999] bg-[#f0f0f0] text-[#505050]" />
        <Icon label="설정" d="M4 7a3 3 0 1 0 6 0a3 3 0 1 0-6 0M3 7a4 4 0 1 0 8 0a4 4 0 1 0-8 0M7 1v2M7 11v2M1 7h2M11 7h2M3 3l1 1M10 10l1 1M11 3l-1 1M4 10l-1 1" className="h-5 w-[19px] border border-[#999] bg-[#f0f0f0] text-[#606060]" />
        <label className="ml-[2px] flex items-center gap-[3px]">
            <input type="checkbox" className="h-[13px] w-[13px] appearance-none border border-[#999] bg-white" />
            D
        </label>
    </div>
);

const QuoteBar = () => (
    <div className="mt-[3px] flex h-5 items-center gap-[3px] px-[3px] whitespace-nowrap">
        <div className="flex h-5 w-[750px] items-center border border-[#888] bg-[#f0f0f0]">
            <div className="flex h-full w-[172px] items-center justify-end gap-[10px] border-r border-[#aaa] pr-[2px] text-[#e81c0c]">
                <span className="mr-auto flex w-[73px] items-center justify-end gap-[3px]">
                    15,670
                    <svg width="10" height="9" viewBox="0 0 10 9"><path d="M5 0l5 9H0z" fill="#e81c0c" /></svg>
                </span>
                <span>30</span>
                <span>+0.19%</span>
            </div>
            <div className="flex h-full w-[171px] items-center justify-end gap-[4px] border-r border-[#aaa] pr-[2px]">
                <span className="mr-auto pl-[15px]">2,091,851</span>
                <span className="text-[#1448c8]">52.12%</span>
                <span>72.24%</span>
            </div>
            <div className="flex h-full w-[82px] items-center justify-end border-r border-[#aaa] pr-[2px]">35,093백만</div>
            <div className="flex h-full w-[140px] items-center justify-between border-r border-[#aaa] px-[3px]">
                <span>최우선</span>
                <span className="text-[#e81c0c]">15,670</span>
                <span className="text-[#e81c0c]">15,660</span>
            </div>
            <div className="flex flex-1 items-center justify-between pr-[6px] pl-[2px]">
                <span>시</span><span className="text-[#e81c0c]">16,310</span>
                <span>고</span><span className="text-[#e81c0c]">18,640</span>
                <span>저</span><span className="text-[#1448c8]">15,500</span>
            </div>
        </div>
        <button className="h-5 w-10 border border-[#888] bg-[#f4d0cc]">매수</button>
        <button className="h-5 w-10 border border-[#888] bg-[#c4dcf4]">매도</button>
    </div>
);

const playIcons: [string, string][] = [
    ["재생", "M5 3l5 4-5 4z"], ["뒤로", "M6 3v8L2 7zM11 3v8L7 7z"], ["정지", "M4 3h7v8H4z"], ["앞으로", "M2 3v8l4-4zM7 3v8l4-4z"],
];
const drawIcons: [string, string][] = [
    ["추가", "M10.5 6V1.5h-9v11H5M6.5 7.5h7v6h-7zM10 7v6M6 10.5h7"], ["겹치기", "M1.5 1.5h8v7h-8zM1 2.5h8M5.5 5.5h8v8h-8z"], ["영역", "M0 2.5h14M0 12.5h14M1 8l3-3 3 3 3-4 3 3"],
    ["기준선", "M3.5 1v13M0 3.5h13M6 6l6 6M6.5 6v5M6 6.500h5"], ["추세선", "M0 2.500h13M1 11l3-6 3 5 3-3 3 4"], ["수직선", "M5.500 0v14M0 11l3-5 3 4 3-3 4 4"],
    ["사선", "M1 13L11 1M0 12l4-5 4 4 5-2"], ["지우기", "M1 9l6-6h4L6 10H1zM8.500 13V9M10.500 9v4M12.500 9v4"], ["차트", "M4.500 4V1.500h9v7H11M1.500 5.500h9v8h-9zM2 11l3-3 2 2 3-3"],
    ["돋보기", "M1.500 5a4 4 0 1 0 8 0a4 4 0 1 0-8 0M8.500 8.500l4 5"], ["축소", "M2 7h10M2 8h10"], ["확대", "M1 7h12M7 1v12M6 1v12M1 8h12"],
];

const BottomBar = () => (
    <footer className="flex h-[18px] items-center bg-[#f6f6f6] px-[3px]">
        <button aria-label="왼쪽" className="flex h-[17px] w-[17px] items-center justify-center border border-t-white border-r-[#777] border-b-[#777] border-l-white bg-[#f0f0f0]">
            <svg width="5" height="8" viewBox="0 0 5 8"><path d="M5 0v8L0 4z" /></svg>
        </button>
        <div className="h-[17px] flex-[459]" />
        <div className="h-[17px] w-[61px] border border-t-white border-r-[#777] border-b-[#777] border-l-[#ccc] bg-[#f0f0f0] shadow-[1px_1px_0_#888]" />
        <div className="h-[17px] flex-[1003]" />
        {playIcons.map(([label, d]) => (
            <button key={label} aria-label={label} className="flex h-[17px] w-[17px] items-center justify-center border border-t-white border-r-[#777] border-b-[#777] border-l-[#ccc] bg-[#f0f0f0]">
                <svg width="14" height="14" viewBox="0 0 14 14"><path d={d} /></svg>
            </button>
        ))}
        <div className="ml-[4px] flex h-[18px] items-center bg-[#e8e8e8]">
            <svg className="mr-[6px]" width="72" height="17" viewBox="0 0 72 17" shapeRendering="crispEdges">
                <rect x="2" y="3" width="68" height="3" fill="#fff" stroke="#999" />
                <path d="M6 1h4v8l-2 2-2-2z" fill="#f0f0f0" stroke="#888" />
                <path d="M2.500 14v3M9.500 14v3M15.500 14v3M22.500 14v3M28.500 14v3M35.500 14v3M42.500 14v3M48.500 14v3M55.500 14v3M61.500 14v3M68.500 14v3" stroke="#000" />
            </svg>
            {drawIcons.map(([label, d]) => <Icon key={label} label={label} d={d} className={clsx("h-[17px] w-[17px] text-[#606060]", label === "기준선" && "bg-white")} />)}
            <button className="w-[17px] font-bold text-[#505050]">A</button>
        </div>
    </footer>
);

export default function App() {
    return (
        <div className="min-h-screen bg-black pt-px font-['Noto_Sans_CJK_KR',sans-serif] text-xs leading-4 text-black">
            <div className="mx-px"><TitleBar /></div>
            <main className="mr-[3px] ml-[3px] bg-[#d0d0d0] pt-[5px] pb-[3px]">
                <Toolbar />
                <QuoteBar />
                <div className="mt-[3px] bg-[#e8e8e8] px-[3px]"><Chart /></div>
                <BottomBar />
            </main>
        </div>
    );
}
